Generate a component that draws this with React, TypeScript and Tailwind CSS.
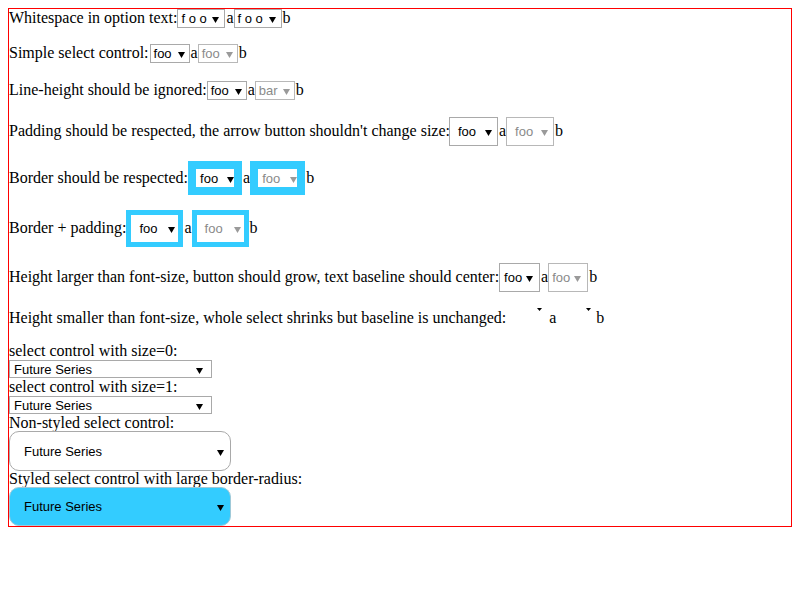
import type { ReactNode } from 'react';

const serif = "font-['Liberation_Serif','Times_New_Roman',serif]";
const sans = "font-['Liberation_Sans',Arial,sans-serif]";

const Arrow = ({ gray = false }: { gray?: boolean }) => (
  <svg width="7" height="6" viewBox="0 0 7 6" className="shrink-0">
    <path d="M0 0H7L3.5 6Z" fill={gray ? '#9a9a9a' : '#000'} />
  </svg>
);

interface SelProps {
  text: string;
  box: string;
  inner: string;
  disabled?: boolean;
}

// fake <select>: outer box handles size/border, inner row sits text and arrow on one baseline
const Sel = ({ text, box, inner, disabled = false }: SelProps) => (
  <span className={`inline-flex items-center box-border shrink-0 ${sans} text-[13px] ${box}`}>
    <span className={`flex w-full items-baseline justify-between leading-[15px] ${inner}`}>
      <span className={`whitespace-pre ${disabled ? 'text-[#8a8a8a]' : 'text-black'}`}>{text}</span>
      <Arrow gray={disabled} />
    </span>
  </span>
);

const Row = ({ className, children }: { className: string; children: ReactNode }) => (
  <div className={`flex items-baseline leading-[18px] ${className}`}>{children}</div>
);

const Tiny = ({ className }: { className: string }) => (
  <span className={`flex h-[3px] w-[30px] shrink-0 justify-end overflow-hidden pr-[4px] -mt-[1px] ${className}`}>
    <svg width="5" height="3" viewBox="0 0 5 3">
      <path d="M0 0H5L2.5 3Z" fill="#000" />
    </svg>
  </span>
);

export default function App() {
  return (
    <div className={`bg-white p-[8px] text-[16px] text-black ${serif}`}>
      <div className="flex flex-col border border-[#ff0000]">
        <Row className="mt-0">
          <span>Whitespace in option text:</span>
          <Sel text="f o o" box="ml-0 h-[19px] w-[48px] border border-[#a9a9a9]" inner="pl-[3px] pr-[5px]" />
          <span className="ml-[1px]">a</span>
          <Sel text="f o o" box="ml-0 h-[19px] w-[48px] border border-[#a9a9a9]" inner="pl-[3px] pr-[5px]" />
          <span className="ml-[1px]">b</span>
        </Row>

        <Row className="mt-[16px]">
          <span>Simple select control:</span>
          <Sel text="foo" box="ml-[1px] h-[19px] w-[40px] border border-[#a9a9a9]" inner="pl-[3px] pr-[4px]" />
          <span className="ml-[1px]">a</span>
          <Sel text="foo" disabled box="ml-0 h-[19px] w-[40px] border border-[#b8b8b8]" inner="pl-[3px] pr-[4px]" />
          <span className="ml-[1px]">b</span>
        </Row>

        <Row className="mt-[18px]">
          <span>Line-height should be ignored:</span>
          <Sel text="foo" box="ml-0 h-[19px] w-[40px] border border-[#a9a9a9]" inner="pl-[3px] pr-[4px]" />
          <span className="ml-[1px]">a</span>
          <Sel text="bar" disabled box="ml-0 h-[19px] w-[40px] border border-[#b8b8b8]" inner="pl-[3px] pr-[4px]" />
          <span className="ml-[1px]">b</span>
        </Row>

        <Row className="mt-[17px]">
          <span>Padding should be respected, the arrow button shouldn&apos;t change size:</span>
          <Sel text="foo" box="-ml-[1px] h-[29px] w-[49px] border border-[#a9a9a9]" inner="pl-[8px] pr-[5px]" />
          <span className="ml-[1px]">a</span>
          <Sel text="foo" disabled box="ml-0 h-[29px] w-[48px] border border-[#b8b8b8]" inner="pl-[8px] pr-[5px]" />
          <span className="ml-[1px]">b</span>
        </Row>

        <Row className="mt-[15px]">
          <span>Border should be respected:</span>
          <Sel text="foo" box="ml-0 h-[34px] w-[54px] border-[8px] border-[#33ccff]" inner="pl-[4px] pr-0" />
          <span className="ml-[1px]">a</span>
          <Sel text="foo" disabled box="ml-0 h-[34px] w-[55px] border-[8px] border-[#33ccff]" inner="pl-[4px] pr-0" />
          <span className="ml-[1px]">b</span>
        </Row>

        <Row className="mt-[15px]">
          <span>Border + padding:</span>
          <Sel text="foo" box="ml-0 h-[37px] w-[57px] border-[5px] border-[#33ccff]" inner="pl-[8px] pr-[3px]" />
          <span className="ml-[1px]">a</span>
          <Sel text="foo" disabled box="ml-0 h-[37px] w-[57px] border-[5px] border-[#33ccff]" inner="pl-[8px] pr-[3px]" />
          <span className="ml-[1px]">b</span>
        </Row>

        <Row className="mt-[16px]">
          <span>Height larger than font-size, button should grow, text baseline should center:</span>
          <Sel text="foo" box="ml-0 h-[29px] w-[41px] border border-[#a9a9a9]" inner="pl-[4px] pr-[6px]" />
          <span className="ml-[1px]">a</span>
          <Sel text="foo" disabled box="ml-0 h-[29px] w-[40px] border border-[#b8b8b8]" inner="pl-[3px] pr-[6px]" />
          <span className="ml-[1px]">b</span>
        </Row>

        <div className="mt-[17px] flex h-[18px] items-start leading-[18px]">
          <span>Height smaller than font-size, whole select shrinks but baseline is unchanged:</span>
          <Tiny className="ml-[10px]" />
          <span className="ml-[3px]">a</span>
          <Tiny className="ml-[9px]" />
          <span className="ml-[1px]">b</span>
        </div>

        <div className="mt-[15px] h-[18px] leading-[18px]">select control with size=0:</div>
        <Sel text="Future Series" box="h-[18px] w-[203px] border border-[#a9a9a9]" inner="pl-[4px] pr-[8px]" />
        <div className="h-[18px] leading-[18px]">select control with size=1:</div>
        <Sel text="Future Series" box="h-[18px] w-[203px] border border-[#a9a9a9]" inner="pl-[4px] pr-[8px]" />
        <div className="h-[17px] leading-[18px]">Non-styled select control:</div>
        <Sel
          text="Future Series"
          box="h-[40px] w-[222px] rounded-[10px] border border-[#a9a9a9] bg-white"
          inner="pl-[14px] pr-[6px]"
        />
        <div className="h-[16px] leading-[16px]">Styled select control with large border-radius:</div>
        <Sel
          text="Future Series"
          box="h-[39px] w-[222px] rounded-[10px] border border-[#9fc9d8] bg-[#33ccff]"
          inner="pl-[14px] pr-[6px]"
        />
      </div>
    </div>
  );
}
